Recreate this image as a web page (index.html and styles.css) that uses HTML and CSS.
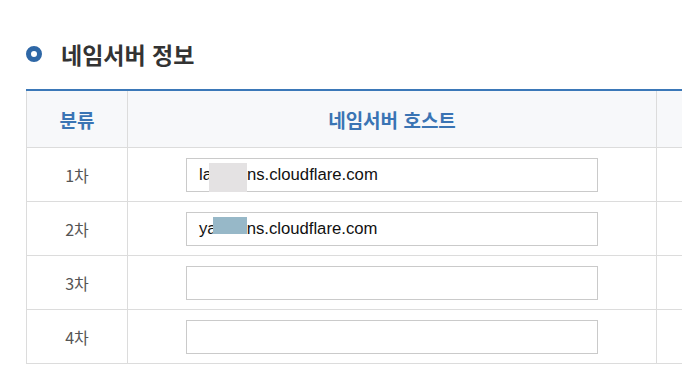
FILE: index.html
```html
<!DOCTYPE html>
<html lang="ko">
<head>
    <meta charset="UTF-8">
    <meta name="viewport" content="width=device-width, initial-scale=1.0">
    <title>네임서버 정보</title>
    <link rel="stylesheet" href="styles.css">
</head>
<body>
    <section class="ns-section">
        <h2 class="section-title"><span class="bullet"></span>네임서버 정보</h2>

        <table class="ns-table">
            <thead>
                <tr>
                    <th class="col-type">분류</th>
                    <th class="col-host">네임서버 호스트</th>
                    <th class="col-extra"></th>
                </tr>
            </thead>
            <tbody>
                <tr>
                    <td>1차</td>
                    <td><div class="ns-field">la<span class="mask mask-gray"></span>ns.cloudflare.com</div></td>
                    <td></td>
                </tr>
                <tr>
                    <td>2차</td>
                    <td><div class="ns-field">ya<span class="mask mask-blue"></span>ns.cloudflare.com</div></td>
                    <td></td>
                </tr>
                <tr>
                    <td>3차</td>
                    <td><div class="ns-field"></div></td>
                    <td></td>
                </tr>
                <tr>
                    <td>4차</td>
                    <td><div class="ns-field"></div></td>
                    <td></td>
                </tr>
            </tbody>
        </table>
    </section>
</body>
</html>
```

FILE: styles.css
```css
body {
    margin: 0;
    background: #fff;
    font-family: "Noto Sans CJK KR", "Noto Sans", sans-serif;
}

.ns-section {
    padding: 35px 0 0 26px;
    overflow: hidden;
}

.section-title {
    display: flex;
    align-items: center;
    gap: 19px;
    margin: 0 0 16px;
    height: 38px;
    font-size: 23px;
    font-weight: 700;
    color: #333;
}

.bullet {
    width: 16px;
    height: 16px;
    box-sizing: border-box;
    border: 5px solid #2e67a6;
    border-radius: 50%;
}

.ns-table {
    width: 760px;
    border-collapse: collapse;
    border-top: 2px solid #3b78b8;
}

.ns-table th,
.ns-table td {
    border: 1px solid #dcdcdc;
    padding: 0;
    text-align: center;
}

.ns-table th {
    height: 56px;
    background-color: #f7f8fa;
    color: #3a74b4;
    font-size: 19px;
    font-weight: 700;
    border-top: none;
}

.ns-table td {
    height: 53px;
    color: #555;
    font-size: 16px;
}

.col-type {
    width: 100px;
}

.col-host {
    width: 528px;
}

.ns-field {
    display: flex;
    align-items: flex-start;
    width: 412px;
    height: 34px;
    margin: 0 auto;
    box-sizing: border-box;
    padding: 0 12px;
    border: 1px solid #cacaca;
    font-family: "Liberation Sans", Arial, sans-serif;
    font-size: 16.7px;
    line-height: 32px;
    color: #111;
    text-align: left;
}

.mask {
    margin-top: 4px;
}

.mask-gray {
    width: 38px;
    height: 29px;
    margin-left: -3px;
    margin-right: 0;
    background-color: #e4e2e3;
}

.mask-blue {
    width: 34px;
    height: 17px;
    margin-left: -4px;
    margin-right: 0;
    background-color: #97b8c8;
}
```
